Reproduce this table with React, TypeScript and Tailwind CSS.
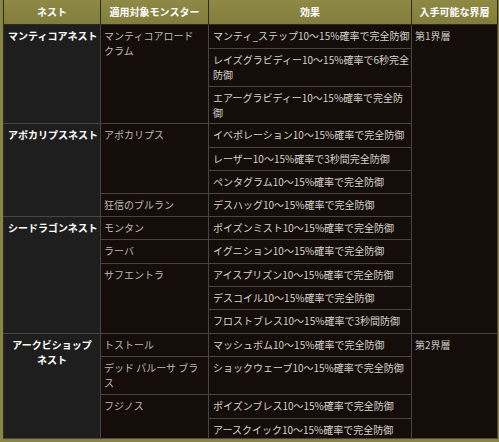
import type { ReactNode } from "react";

type Row = {
  nest?: { label: ReactNode; span: number };
  monster?: { label: ReactNode; span: number };
  effect: ReactNode;
  floor?: { label: string; span: number };
  h: number;
};

const rows: Row[] = [
  {
    nest: { label: "マンティコアネスト", span: 3 },
    monster: { label: <>マンティコアロード<br />クラム</>, span: 3 },
    effect: "マンティ_ステップ10～15%確率で完全防御",
    floor: { label: "第1界層", span: 12 },
    h: 24,
  },
  { effect: <>レイズグラビディー10～15%確率で6秒完全<br />防御</>, h: 38 },
  { effect: <>エアーグラビディー10～15%確率で完全防<br />御</>, h: 37 },
  {
    nest: { label: "アポカリプスネスト", span: 4 },
    monster: { label: "アポカリプス", span: 3 },
    effect: "イベポレーション10～15%確率で完全防御",
    h: 24,
  },
  { effect: "レーザー10～15%確率で3秒間完全防御", h: 23 },
  { effect: "ペンタグラム10～15%確率で完全防御", h: 23 },
  { monster: { label: "狂信のブルラン", span: 1 }, effect: "デスハッグ10～15%確率で完全防御", h: 23 },
  {
    nest: { label: "シードラゴンネスト", span: 5 },
    monster: { label: "モンタン", span: 1 },
    effect: "ポイズンミスト10～15%確率で完全防御",
    h: 23,
  },
  { monster: { label: "ラーバ", span: 1 }, effect: "イグニション10～15%確率で完全防御", h: 24 },
  { monster: { label: "サフエントラ", span: 3 }, effect: "アイスプリズン10～15%確率で完全防御", h: 23 },
  { effect: "デスコイル10～15%確率で完全防御", h: 23 },
  { effect: "フロストブレス10～15%確率で3秒間防御", h: 24 },
  {
    nest: { label: <>アークビショップ<br />ネスト</>, span: 4 },
    monster: { label: "トストール", span: 1 },
    effect: "マッシュボム10～15%確率で完全防御",
    floor: { label: "第2界層", span: 4 },
    h: 23,
  },
  {
    monster: { label: <>デッド パルーサ ブラ<br />ス</>, span: 1 },
    effect: "ショックウェーブ10～15%確率で完全防御",
    h: 38,
  },
  { monster: { label: "フジノス", span: 2 }, effect: "ポイズンブレス10～15%確率で完全防御", h: 24 },
  { effect: "アースクイック10～15%確率で完全防御", h: 20 },
];

const cell = "border border-[#4a4541] align-top pt-[3px] leading-[15px] whitespace-nowrap";

export default function App() {
  return (
    <div
      className="w-[499px] h-[442px] bg-[#8a8442] pl-[3px] pr-[2px] pb-[4px] overflow-hidden text-[10px]"
      style={{ fontFamily: '"Noto Sans CJK JP", "Noto Sans", sans-serif' }}
    >
      <table className="w-[494px] table-fixed border-collapse">
        <colgroup>
          <col className="w-[97px]" />
          <col className="w-[108px]" />
          <col className="w-[203px]" />
          <col className="w-[86px]" />
        </colgroup>
        <thead>
          <tr className="h-[24px]">
            {["ネスト", "適用対象モンスター", "効果", "入手可能な界層"].map((t) => (
              <th
                key={t}
                className="border-x border-x-[#2c2a1a] border-b border-b-[#2a2a22] bg-gradient-to-b from-[#8f8946] to-[#837d3d] text-center font-bold text-white leading-[15px] align-middle"
              >
                {t}
              </th>
            ))}
          </tr>
        </thead>
        <tbody>
          {rows.map((r, i) => (
            <tr key={i} style={{ height: r.h }}>
              {r.nest && (
                <td
                  rowSpan={r.nest.span}
                  className={`${cell} border-l-[#2a2a2a] bg-[#1e1e1e] text-center font-bold text-white px-1`}
                >
                  {r.nest.label}
                </td>
              )}
              {r.monster && (
                <td rowSpan={r.monster.span} className={`${cell} bg-[#140d09] text-[#bdbab6] pl-[3px]`}>
                  {r.monster.label}
                </td>
              )}
              <td className={`${cell} bg-[#140d09] text-[#d6d3cf] pl-[4px]`}>{r.effect}</td>
              {r.floor && (
                <td rowSpan={r.floor.span} className={`${cell} bg-[#140d09] text-[#c9c6c2] pl-[3px]`}>
                  {r.floor.label}
                </td>
              )}
            </tr>
          ))}
        </tbody>
      </table>
    </div>
  );
}
